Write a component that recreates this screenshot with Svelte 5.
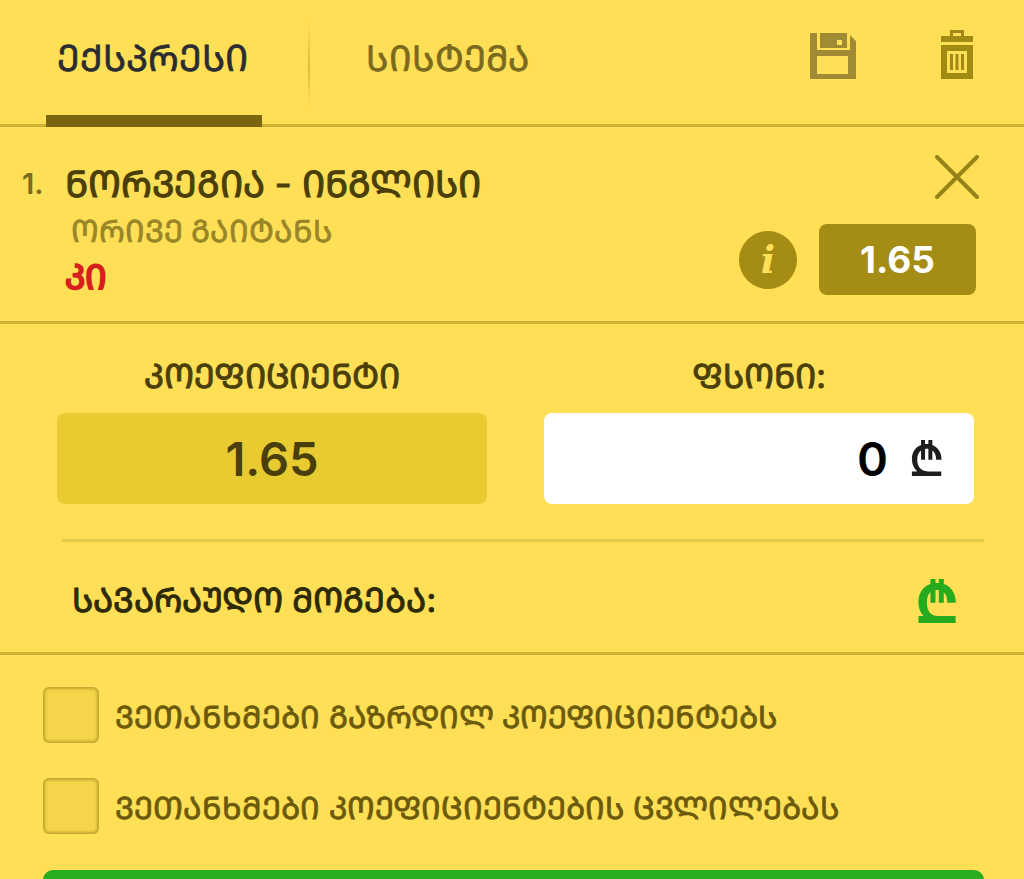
<script lang="ts">
	const options = [
		'ᲕᲔᲗᲐᲜᲮᲛᲔᲑᲘ ᲒᲐᲖᲠᲓᲘᲚ ᲙᲝᲔᲤᲘᲪᲘᲔᲜᲢᲔᲑᲡ',
		'ᲕᲔᲗᲐᲜᲮᲛᲔᲑᲘ ᲙᲝᲔᲤᲘᲪᲘᲔᲜᲢᲔᲑᲘᲡ ᲪᲕᲚᲘᲚᲔᲑᲐᲡ'
	];
</script>

<div class="slip">
	<header class="tabs">
		<button class="tab active">ᲔᲥᲡᲞᲠᲔᲡᲘ</button>
		<span class="tab-divider"></span>
		<button class="tab">ᲡᲘᲡᲢᲔᲛᲐ</button>
		<div class="tools">
			<svg class="save" viewBox="0 0 46 46" width="46" height="46" aria-hidden="true">
				<path fill-rule="evenodd" d="M0 0H7V17H40V2L46 8V46H0ZM7 23V41H38V23Z" />
				<path fill-rule="evenodd" d="M10 0H37V15H10ZM27 7V12H32V7Z" />
			</svg>
			<svg class="trash" viewBox="0 0 32 49" width="32" height="49" aria-hidden="true">
				<path fill-rule="evenodd" d="M9 0H23V6H32V12H0V6H9ZM12 3V6H20V3Z" />
				<path fill-rule="evenodd" d="M0 15H32V49H0ZM6 21V43H26V21Z" />
				<path d="M9 24H12V40H9ZM14.5 24H17.5V40H14.5ZM20 24H23V40H20Z" />
			</svg>
		</div>
	</header>

	<section class="event">
		<div class="event-info">
			<span class="index">1.</span>
			<div class="event-text">
				<div class="event-name">ᲜᲝᲠᲕᲔᲒᲘᲐ - ᲘᲜᲒᲚᲘᲡᲘ</div>
				<div class="market">ᲝᲠᲘᲕᲔ ᲒᲐᲘᲢᲐᲜᲡ</div>
				<div class="pick">ᲙᲘ</div>
			</div>
		</div>
		<div class="event-side">
			<svg class="close" viewBox="0 0 44 44" width="44" height="44" aria-hidden="true">
				<path d="M2 2L42 42M42 2L2 42" />
			</svg>
			<div class="odds-row">
				<span class="info">i</span>
				<span class="odds">1.65</span>
			</div>
		</div>
	</section>

	<section class="stake">
		<div class="fields">
			<div class="field">
				<div class="field-label">ᲙᲝᲔᲤᲘᲪᲘᲔᲜᲢᲘ</div>
				<div class="field-box coef">1.65</div>
			</div>
			<div class="field">
				<div class="field-label">ᲤᲡᲝᲜᲘ:</div>
				<div class="field-box amount">0<span class="lari">₾</span></div>
			</div>
		</div>
		<div class="win">
			<span>ᲡᲐᲕᲐᲠᲐᲣᲓᲝ ᲛᲝᲒᲔᲑᲐ:</span>
			<span class="win-value">₾</span>
		</div>
	</section>

	<section class="confirm">
		{#each options as option}
			<label class="check">
				<span class="box"></span>
				<span>{option}</span>
			</label>
		{/each}
		<button class="submit" aria-label="submit"></button>
	</section>
</div>

<style>
	:global(body) {
		background: #ffdf55;
		overflow: hidden;
	}

	.slip {
		width: 1024px;
		height: 879px;
		overflow: hidden;
		background: #ffdf55;
		font-family: Inter, 'DejaVu Sans', sans-serif;
		color: #4a3f0a;
	}

	.tabs {
		display: flex;
		align-items: center;
		height: 124px;
		padding-left: 46px;
		border-bottom: 3px solid #cfb234;
	}

	.tab {
		height: 127px;
		margin-bottom: -3px;
		padding: 0 0 14px;
		border: 0;
		background: none;
		font: inherit;
		font-size: 35.5px;
		-webkit-text-stroke: 0.7px currentColor;
		color: #7a6a1e;
	}

	.tab.active {
		width: 216px;
		font-size: 36.6px;
		color: #2a2c32;
		border-bottom: 12px solid #7a6510;
		padding: 0 3px 2px 0;
		margin-right: 46px;
	}

	.tab-divider {
		width: 2px;
		height: 84px;
		margin-top: 6px;
		margin-right: 56px;
		background: linear-gradient(to bottom, transparent, #dcbd2a 50%, transparent);
	}

	.tools {
		display: flex;
		align-items: flex-start;
		gap: 85px;
		margin-left: auto;
		margin-right: 51px;
		margin-top: -15px;
	}

	.save {
		fill: #a08a33;
		margin-top: 3px;
	}

	.trash {
		fill: #a08a14;
	}

	.event {
		display: flex;
		justify-content: space-between;
		height: 197px;
		padding: 28px 48px 0 22px;
		box-sizing: border-box;
		border-bottom: 3px solid #cfb234;
	}

	.event-info {
		display: flex;
		gap: 21px;
	}

	.index {
		font-size: 29px;
		line-height: 58px;
		font-weight: 600;
		color: #7a6a1e;
	}

	.event-text {
		display: flex;
		flex-direction: column;
	}

	.event-name {
		font-size: 36.7px;
		line-height: 58px;
		-webkit-text-stroke: 1.1px currentColor;
		color: #4a3f0a;
	}

	.market {
		margin-left: 6px;
		font-size: 30.8px;
		line-height: 36px;
		-webkit-text-stroke: 0.7px currentColor;
		color: #988528;
	}

	.pick {
		font-size: 34px;
		line-height: 56px;
		-webkit-text-stroke: 2px currentColor;
		color: #d81e1e;
	}

	.event-side {
		display: flex;
		flex-direction: column;
		align-items: flex-end;
		gap: 25px;
	}

	.close {
		stroke: #978217;
		stroke-width: 4;
		stroke-linecap: round;
		margin-right: -3px;
	}

	.odds-row {
		display: flex;
		align-items: center;
		gap: 22px;
	}

	.info {
		width: 58px;
		height: 58px;
		border-radius: 50%;
		background: #a58c14;
		color: #ffdf55;
		font-family: 'DejaVu Serif', serif;
		font-style: italic;
		font-weight: 700;
		font-size: 38px;
		line-height: 58px;
		text-align: center;
	}

	.odds {
		width: 157px;
		height: 71px;
		border-radius: 8px;
		background: #a58c14;
		color: #fff;
		font-size: 37px;
		font-weight: 700;
		line-height: 71px;
		text-align: center;
	}

	.stake {
		height: 331px;
		box-sizing: border-box;
		padding-top: 31px;
		border-bottom: 3px solid #cfb234;
	}

	.fields {
		display: flex;
		gap: 57px;
		padding: 0 50px 0 57px;
	}

	.field {
		flex: 1;
	}

	.field-label {
		font-size: 33.5px;
		line-height: 42px;
		-webkit-text-stroke: 1px currentColor;
		text-align: center;
		color: #4a3f0a;
	}

	.field-box {
		height: 91px;
		margin-top: 16px;
		border-radius: 8px;
		font-size: 47px;
		font-weight: 600;
		line-height: 91px;
	}

	.coef {
		background: #e8cb30;
		text-align: center;
		color: #4a3f0a;
	}

	.amount {
		background: #fff;
		text-align: right;
		padding-right: 29px;
		color: #000;
	}

	.lari {
		margin-left: 20px;
		font-size: 50px;
		font-weight: 500;
		color: #1e1e1e;
	}

	.win {
		display: flex;
		justify-content: space-between;
		align-items: center;
		height: 113px;
		margin: 35px 40px 0 62px;
		padding: 0 24px 0 10px;
		border-top: 3px solid #e3c948;
		font-size: 33.7px;
		-webkit-text-stroke: 1px currentColor;
		color: #2e2a08;
	}

	.win-value {
		padding-top: 4px;
		font-size: 60px;
		font-weight: 700;
		-webkit-text-stroke: 0;
		color: #26ab1e;
	}

	.confirm {
		padding: 31px 40px 0 43px;
	}

	.check {
		display: flex;
		align-items: center;
		gap: 16px;
		height: 57px;
		margin-bottom: 34px;
		font-size: 30.8px;
		-webkit-text-stroke: 0.8px currentColor;
		color: #6b5a0c;
	}

	.check span:last-child {
		padding-top: 3px;
	}

	.box {
		width: 56px;
		height: 56px;
		box-sizing: border-box;
		border-radius: 6px;
		box-shadow: inset 0 0 3px 2px #bfa32c;
		background: #f5d64a;
	}

	.submit {
		display: block;
		width: 100%;
		height: 60px;
		border: 0;
		border-radius: 10px;
		background: #28ae20;
		margin-top: 36px;
	}
</style>
